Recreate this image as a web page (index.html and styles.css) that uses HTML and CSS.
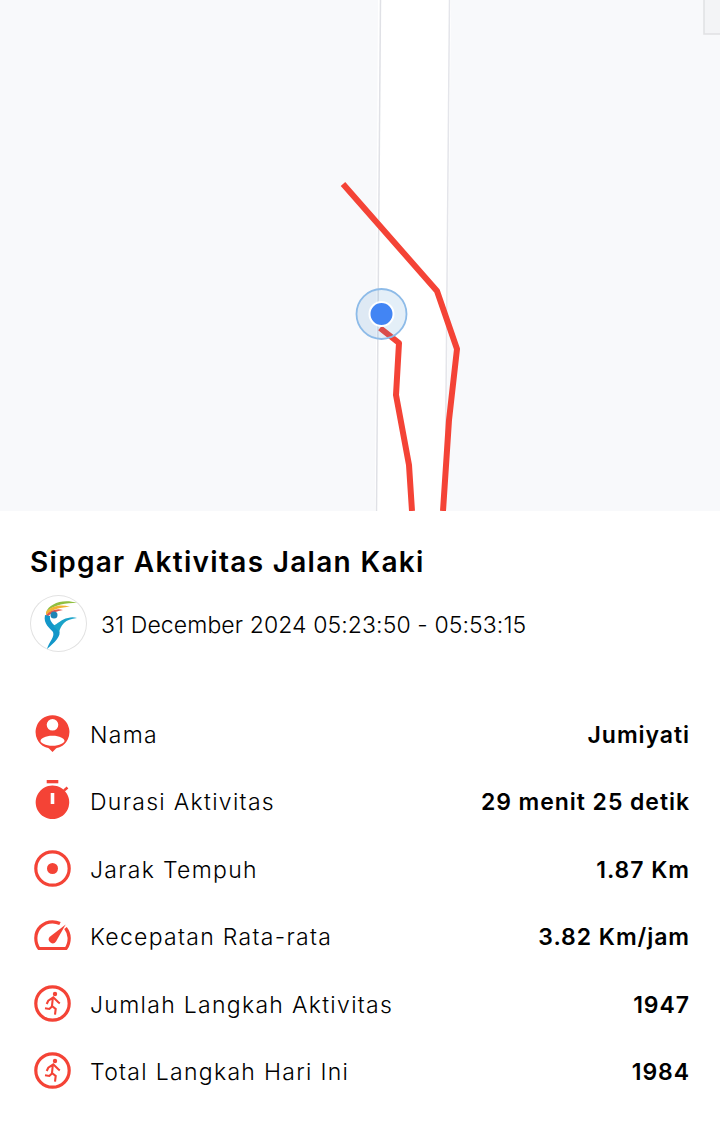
FILE: index.html
```html
<!DOCTYPE html>
<html lang="en">

<head>
    <meta charset="UTF-8">
    <meta name="viewport" content="width=device-width, initial-scale=1.0">
    <title>Sipgar Aktivitas</title>
    <link rel="stylesheet" href="styles.css">
</head>

<body>
    <section class="map">
        <svg class="map-canvas" width="720" height="511" viewBox="0 0 720 511">
            <!-- road -->
            <polygon points="378,0 451,0 446,511 375,511" fill="#fff" />
            <path d="M380.500 0 L376.500 511" stroke="#e0e1e6" stroke-width="1.500" fill="none" />
            <path d="M449.500 0 L445 511" stroke="#e4e5ea" stroke-width="1.500" fill="none" />
            <!-- corner control -->
            <rect x="704" y="-2" width="20" height="36" fill="#f3f4f6" stroke="#e0e1e3" stroke-width="1.500" />
            <!-- track -->
            <path d="M343 184 L437 291 L457 349 L449 420 L443 511" class="track" />
            <path d="M380 328 L399 343 L396 395 L409 465 L412 511" class="track" />
            <!-- current position -->
            <circle cx="381.500" cy="314" r="25" fill="#3f8fd0" fill-opacity="0.14" stroke="#8dbbe8" stroke-width="1.800" />
            <circle cx="381.500" cy="314" r="12" fill="#4285f4" stroke="#fff" stroke-width="2" />
        </svg>
    </section>

    <main class="panel">
        <h1 class="title">Sipgar Aktivitas Jalan Kaki</h1>

        <div class="meta">
            <div class="logo">
                <svg width="56" height="56" viewBox="0 0 56 56">
                    <path d="M16 17 C19 9 33 3 47 8 C36 8 25 9 16 17Z" fill="#8fbf3f" />
                    <path d="M16 17 C21 11 31 9 40 12 C31 12 23 14 16 20Z" fill="#f2b233" />
                    <path d="M16 20 C21 15 27 13 33 15 C27 16 21 18 17 22Z" fill="#e2574c" />
                    <circle cx="24" cy="20" r="3.500" fill="#1d84b5" />
                    <path d="M15 20 L20 21 C19 27 25 30 29 35 C32 41 24 48 17 54 C19 47 25 42 23 37 C20 33 13 29 15 20Z" fill="#1297c9" />
                    <path d="M23 31 C28 29 31 24 38 23 C41 22 44 22 47 23 C41 24 37 25 34 28 C31 31 30 34 29 37 C28 35 25 33 23 31Z" fill="#1aa3c9" />
                </svg>
            </div>
            <p class="meta-date">31 December 2024 05:23:50 - 05:53:15</p>
        </div>

        <ul class="stats">
            <li class="stat">
                <span class="stat-icon">
                    <svg width="38" height="38" viewBox="0 0 38 38">
                        <path fill="#f44336" fill-rule="evenodd" d="M18.500 0.200 A16.800 16.800 0 0 1 26 32.100 C24 33 23 33 22 33.500 L18.500 37 L15 33.500 C14 33 13 33 11 32.100 A16.800 16.800 0 0 1 18.500 0.200Z M18.500 4 A5.800 5.800 0 1 0 18.500 15.600 A5.800 5.800 0 0 0 18.500 4Z M18.500 20.700 C11.500 20.700 6.500 23.500 6.500 25.700 C6.500 28 11.500 30.700 18.500 30.700 C25.500 30.700 30.500 28 30.500 25.700 C30.500 23.500 25.500 20.700 18.500 20.700Z" />
                    </svg>
                </span>
                <span class="stat-label">Nama</span>
                <span class="stat-value">Jumiyati</span>
            </li>
            <li class="stat">
                <span class="stat-icon">
                    <svg width="38" height="38" viewBox="0 0 38 38" overflow="visible">
                        <rect x="12.700" y="-2" width="11.600" height="3.300" fill="#f44336" />
                        <path fill="#f44336" fill-rule="evenodd" d="M18.500 3.500 A16.800 16.800 0 1 1 18.400 3.500Z M16.700 11 V22 H20.300 V11Z" />
                        <path d="M30 8.500 L33.500 5.500" stroke="#f44336" stroke-width="2.500" />
                    </svg>
                </span>
                <span class="stat-label">Durasi Aktivitas</span>
                <span class="stat-value">29 menit 25 detik</span>
            </li>
            <li class="stat">
                <span class="stat-icon">
                    <svg width="38" height="38" viewBox="0 0 38 38">
                        <circle cx="18.500" cy="18.500" r="16.700" fill="none" stroke="#f44336" stroke-width="3.200" />
                        <circle cx="18.500" cy="18.500" r="5.500" fill="#f44336" />
                    </svg>
                </span>
                <span class="stat-label">Jarak Tempuh</span>
                <span class="stat-value">1.87 Km</span>
            </li>
            <li class="stat">
                <span class="stat-icon">
                    <svg width="38" height="38" viewBox="0 0 38 38">
                        <path d="M26 6.500 C23.500 5.300 21 4.800 18.500 4.800 C9.300 4.800 1.800 12 1.800 21 C1.800 25 3 29 5 31.500 H32 C34 29 35.200 25 35.200 21 C35.200 17 33.800 14 31.500 11" fill="none" stroke="#f44336" stroke-width="3.200" stroke-linejoin="round" />
                        <path d="M31.700 7.500 L22 24.500 A4 4 0 0 1 16.500 25.500 A4 4 0 0 1 15.500 20Z" fill="#f44336" />
                    </svg>
                </span>
                <span class="stat-label">Kecepatan Rata-rata</span>
                <span class="stat-value">3.82 Km/jam</span>
            </li>
            <li class="stat">
                <span class="stat-icon">
                    <svg width="38" height="38" viewBox="0 0 38 38">
                        <circle cx="18.500" cy="18.500" r="16.700" fill="none" stroke="#f44336" stroke-width="3.200" />
                        <circle cx="21" cy="9" r="2.200" fill="#f44336" />
                        <path d="M12.700 19 L14.300 15.700 L19.300 12.300 L24.300 17.300 L25.800 18.300 M18.800 13 L18 21 L21.700 24 L21 29.700 M17.700 21.700 L15.300 24 L11 23.300" fill="none" stroke="#f44336" stroke-width="2.100" />
                    </svg>
                </span>
                <span class="stat-label">Jumlah Langkah Aktivitas</span>
                <span class="stat-value">1947</span>
            </li>
            <li class="stat">
                <span class="stat-icon">
                    <svg width="38" height="38" viewBox="0 0 38 38">
                        <circle cx="18.500" cy="18.500" r="16.700" fill="none" stroke="#f44336" stroke-width="3.200" />
                        <circle cx="21" cy="9" r="2.200" fill="#f44336" />
                        <path d="M12.700 19 L14.300 15.700 L19.300 12.300 L24.300 17.300 L25.800 18.300 M18.800 13 L18 21 L21.700 24 L21 29.700 M17.700 21.700 L15.300 24 L11 23.300" fill="none" stroke="#f44336" stroke-width="2.100" />
                    </svg>
                </span>
                <span class="stat-label">Total Langkah Hari Ini</span>
                <span class="stat-value">1984</span>
            </li>
        </ul>
    </main>
</body>

</html>
```

FILE: styles.css
```css
body {
    margin: 0;
    background-color: #fff;
    color: #000;
    font-family: Inter, "Noto Sans", sans-serif;
}

/* Map on top */
.map {
    height: 511px;
    background-color: #f8f9fb;
    overflow: hidden;
}

.map-canvas {
    display: block;
}

.track {
    fill: none;
    stroke: #f44336;
    stroke-width: 6;
    stroke-linejoin: round;
}

/* Details below the map */
.panel {
    padding: 34px 30px 0;
}

.title {
    margin: 0;
    font-size: 28px;
    line-height: 34px;
    font-weight: 600;
    letter-spacing: 1.300px;
}

.meta {
    display: flex;
    align-items: center;
    gap: 14px;
    margin-top: 16px;
}

.logo {
    width: 57px;
    height: 57px;
    border-radius: 50%;
    box-shadow: inset 0 0 0 1px #e2e2e2;
}

.logo svg {
    display: block;
}

.meta-date {
    margin: 0;
    padding-top: 2px;
    font-size: 23px;
    font-weight: 300;
    letter-spacing: 0.100px;
}

.stats {
    list-style-type: none;
    margin: 48px 0 0;
    padding: 0;
}

.stat {
    display: flex;
    align-items: center;
    height: 67.500px;
    font-size: 23px;
}

.stat-icon {
    width: 38px;
    height: 38px;
    margin: 0 18px 0 4px;
}

.stat-icon svg {
    display: block;
}

.stat-label {
    padding-top: 2px;
    font-weight: 300;
    letter-spacing: 1.300px;
}

.stat-value {
    margin-left: auto;
    padding-top: 2px;
    font-weight: 600;
    letter-spacing: 0.950px;
}
```
